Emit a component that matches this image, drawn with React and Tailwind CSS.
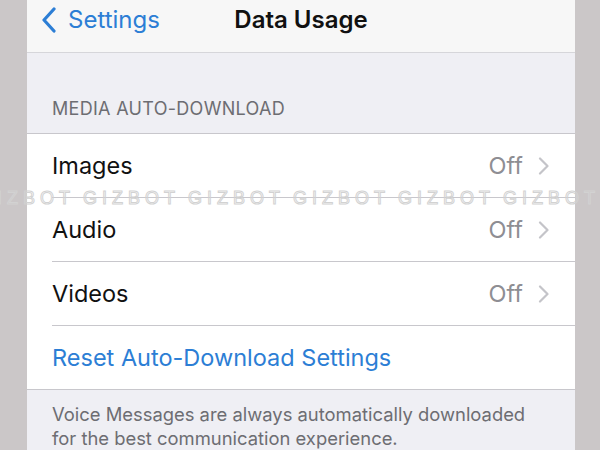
const font = { fontFamily: 'Inter, "Liberation Sans", sans-serif' };

const rows = [
  { label: 'Images', value: 'Off' },
  { label: 'Audio', value: 'Off' },
  { label: 'Videos', value: 'Off' },
];

/* Back chevron drawn by hand: thicker and taller than the lucide one */
function BackChevron() {
  return (
    <svg width="16" height="26" viewBox="0 0 16 26" fill="none" className="shrink-0">
      <path d="M13 2L3 13l10 11" stroke="#2c7ed5" strokeWidth="3.2" strokeLinecap="round" strokeLinejoin="round" />
    </svg>
  );
}

function Disclosure() {
  return (
    <svg width="12" height="18" viewBox="0 0 12 18" fill="none" className="ml-[15px] shrink-0">
      <path d="M2 1.5L9.5 9 2 16.5" stroke="#c4c4c9" strokeWidth="2.2" strokeLinecap="round" strokeLinejoin="round" />
    </svg>
  );
}

export default function App() {
  return (
    <div className="relative w-[600px] h-[450px] overflow-hidden bg-[#cbc7c8] flex" style={font}>
      <div className="w-[27px] shrink-0" />

      <div className="flex-1 flex flex-col bg-[#efeff4]">
        {/* Nav bar */}
        <div className="relative h-[53px] shrink-0 bg-[#f7f7f7] border-b border-[#d6d6da] flex items-start pt-[5px]">
          <div className="flex items-center gap-[11px] pl-[14px] text-[#2c7ed5] text-[24px] leading-[30px]">
            <BackChevron />
            <span>Settings</span>
          </div>
          <div className="absolute left-0 right-0 top-[5px] text-center text-[#111] text-[24px] leading-[30px] font-semibold">
            Data Usage
          </div>
        </div>

        {/* Section header */}
        <div className="h-[80px] shrink-0 flex items-end pb-[11px] pl-[25px] text-[#6d6d72] text-[18px] tracking-[0.3px]">
          MEDIA AUTO-DOWNLOAD
        </div>

        {/* Group */}
        <div className="bg-white border-t border-b border-[#c8c7cc] shrink-0">
          {rows.map(row => (
            <div key={row.label} className="pl-[25px]">
              <div className="h-[64px] border-b border-[#c8c7cc] flex items-center pr-[25px]">
                <span className="flex-1 text-[#111] text-[23.5px]">{row.label}</span>
                <span className="text-[#8e8e93] text-[23.5px]">{row.value}</span>
                <Disclosure />
              </div>
            </div>
          ))}
          <div className="h-[63px] flex items-center pl-[25px] text-[#2c7ed5] text-[23.5px]">
            Reset Auto-Download Settings
          </div>
        </div>

        {/* Footer note */}
        <div className="pl-[25px] pt-[12px] text-[#6d6d72] text-[18.4px] leading-[24px]">
          Voice Messages are always automatically downloaded
          <br />
          for the best communication experience.
        </div>
      </div>

      <div className="w-[25px] shrink-0" />

      {/* Watermark overlay */}
      <div className="absolute left-0 right-0 top-[189px] overflow-hidden pointer-events-none">
        <div className="ml-[-22px] flex gap-[8px] whitespace-nowrap text-[18px] leading-[18px] tracking-[5px] text-transparent [-webkit-text-stroke:1px_#d2d2d2]"
          style={{ fontFamily: '"Liberation Sans", sans-serif' }}>
          <span>GIZBOT</span>
          <span>GIZBOT</span>
          <span>GIZBOT</span>
          <span>GIZBOT</span>
          <span>GIZBOT</span>
          <span>GIZBOT</span>
        </div>
      </div>
    </div>
  );
}
